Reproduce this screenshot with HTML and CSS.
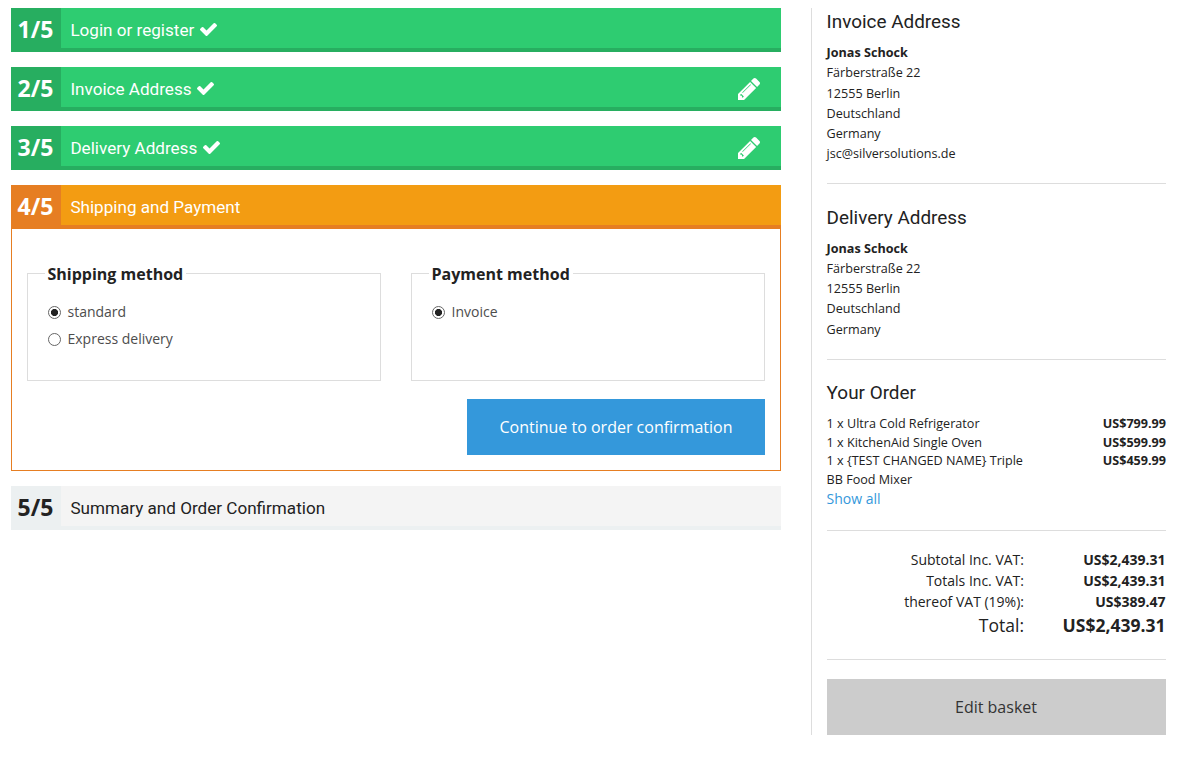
FILE: index.html
```html
<!DOCTYPE html>
<html lang="en">
<head>
<meta charset="utf-8">
<title>Checkout</title>
<link rel="stylesheet" href="styles.css">
</head>
<body>
<svg class="sprite" aria-hidden="true">
  <symbol id="check" viewBox="121 334 1550 1188"><path d="M1671 566q0 40-28 68l-724 724-136 136q-28 28-68 28t-68-28l-136-136-362-362q-28-28-28-68t28-68l136-136q28-28 68-28t68 28l294 295 656-657q28-28 68-28t68 28l136 136q28 28 28 68z"/></symbol>
  <symbol id="pencil" viewBox="128 149 1515 1515"><path d="M471 1490l60-60-190-190-50 50v80h110v120h70zm543-882q0-22-22-22-10 0-17 7l-542 542q-7 7-7 17 0 22 22 22 10 0 17-7l542-542q7-7 7-17zm-54-192l416 416-832 832h-416v-416zm683 96q0 53-37 90l-166 166-416-416 166-165q36-38 90-38 53 0 91 38l235 234q37 39 37 91z"/></symbol>
</svg>
<div class="page">
  <main class="steps">
    <section class="bar done"><span class="num">1/5</span><h2 class="title">Login or register</h2><svg class="check"><use href="#check"/></svg></section>
    <section class="bar done"><span class="num">2/5</span><h2 class="title">Invoice Address</h2><svg class="check"><use href="#check"/></svg><svg class="pencil"><use href="#pencil"/></svg></section>
    <section class="bar done"><span class="num">3/5</span><h2 class="title">Delivery Address</h2><svg class="check"><use href="#check"/></svg><svg class="pencil"><use href="#pencil"/></svg></section>
    <section class="current">
      <div class="bar active"><span class="num">4/5</span><h2 class="title">Shipping and Payment</h2></div>
      <form class="panel">
        <div class="methods">
          <fieldset class="method">
            <legend class="legend">Shipping method</legend>
            <label class="option"><input class="radio" type="radio" name="ship" checked>standard</label>
            <label class="option"><input class="radio" type="radio" name="ship">Express delivery</label>
          </fieldset>
          <fieldset class="method">
            <legend class="legend">Payment method</legend>
            <label class="option"><input class="radio" type="radio" name="pay" checked>Invoice</label>
          </fieldset>
        </div>
        <button class="button primary" type="button">Continue to order confirmation</button>
      </form>
    </section>
    <section class="bar pending"><span class="num">5/5</span><h2 class="title">Summary and Order Confirmation</h2></section>
  </main>
  <aside class="side">
    <section class="block invoice">
      <h3 class="heading">Invoice Address</h3>
      <address class="address"><b>Jonas Schock</b><br>Färberstraße 22<br>12555 Berlin<br>Deutschland<br>Germany<br>jsc@silversolutions.de</address>
    </section>
    <section class="block delivery">
      <h3 class="heading">Delivery Address</h3>
      <address class="address"><b>Jonas Schock</b><br>Färberstraße 22<br>12555 Berlin<br>Deutschland<br>Germany</address>
    </section>
    <section class="block order">
      <h3 class="heading">Your Order</h3>
      <div class="item"><span>1 x Ultra Cold Refrigerator</span><b>US$799.99</b></div>
      <div class="item"><span>1 x KitchenAid Single Oven</span><b>US$599.99</b></div>
      <div class="item"><span>1 x {TEST CHANGED NAME} Triple<br>BB Food Mixer</span><b>US$459.99</b></div>
      <a class="more">Show all</a>
    </section>
    <section class="block totals">
      <div class="sum"><span class="label">Subtotal Inc. VAT:</span><b>US$2,439.31</b></div>
      <div class="sum"><span class="label">Totals Inc. VAT:</span><b>US$2,439.31</b></div>
      <div class="sum"><span class="label">thereof VAT (19%):</span><b>US$389.47</b></div>
      <div class="sum grand"><span class="label">Total:</span><b>US$2,439.31</b></div>
    </section>
    <button class="button secondary" type="button">Edit basket</button>
  </aside>
</div>
</body>
</html>
```
FILE: styles.css
```css
* { box-sizing: border-box; }
body { margin: 0; background: #fff; color: #222; font-family: "Open Sans", sans-serif; }
.sprite { display: none; }
.page { display: flex; gap: 30px; padding: 8px 31px 0 11px; }
.steps { width: 770px; display: flex; flex-direction: column; gap: 15px; }

.bar { display: flex; align-items: stretch; height: 44px; border-bottom: 4px solid; color: #fff; }
.num { width: 50px; height: 44px; margin-bottom: -4px; padding-right: 1px; font-weight: 700; font-size: 23px; line-height: 43px; text-align: center; }
.title { margin: 0 0 0 9.4px; font: 400 17.1px/44px Roboto, sans-serif; white-space: nowrap; }
.done { background: #2ecc71; border-color: #27ae60; }
.done .num { background: #27ae60; }
.active { background: #f39c12; border-color: #e67e22; }
.active .num { background: #e67e22; }
.pending { background: #f4f4f4; border-color: #ecf0f1; color: #222; }
.pending .num { background: #ecf0f1; }
.check { width: 17px; height: 13px; margin: 15px 0 0 5.5px; fill: #fff; }
.pencil { width: 22px; height: 22px; margin: 11px 21px 0 auto; fill: #fff; }

.panel { height: 242px; padding: 33px 15px 15px; border: 1px solid #e67e22; border-top: 0; }
.methods { display: grid; grid-template-columns: 1fr 1fr; gap: 30px; height: 119px; }
.method { margin: 0; padding: 13px 20px 0; height: 119px; border: 1px solid #ddd; }
.legend { margin-left: -3.5px; padding: 1px 3px 0; font-weight: 700; font-size: 16px; line-height: 22px; }
.option { display: flex; align-items: center; height: 27px; font-size: 14px; color: #4d4d4d; }
.radio { appearance: none; width: 13px; height: 13px; margin: 1px 6.5px 0 0; border: 1px solid #666; border-radius: 50%; background: #fff; }
.radio:checked { background: radial-gradient(circle, #222 3.2px, #fff 3.9px); }
.button { display: block; height: 56px; padding: 0; border: 0; font: 400 16px "Open Sans", sans-serif; }
.primary { width: 298px; margin: 18px 0 0 auto; background: #3498db; color: #fff; }
.secondary { width: 100%; margin-top: 19px; padding-right: 1px; background: #ccc; color: #333; }

.side { flex: 1; height: 727px; padding-left: 15px; border-left: 1px solid #ddd; }
.block { border-bottom: 1px solid #ddd; }
.heading { margin: 0 0 0 -0.4px; font: 400 18.9px/26px Roboto, sans-serif; }
.address { margin-left: -0.4px; font-style: normal; font-size: 12.6px; line-height: 20.2px; }
.invoice { height: 176px; padding-top: 1px; }
.invoice .address { padding-top: 8.2px; }
.delivery { height: 176px; padding-top: 21px; }
.delivery .address { padding-top: 7.8px; }
.order { height: 171px; padding-top: 20px; }
.order .heading { margin-bottom: 9px; }
.item { display: flex; justify-content: space-between; margin-left: -0.4px; font-size: 12.6px; line-height: 18.6px; }
.more { display: block; margin-left: -0.4px; color: #3498db; font-size: 14px; line-height: 20px; }
.totals { height: 129px; padding-top: 18px; }
.sum { display: grid; grid-template-columns: 197px 1fr; padding-right: 0.5px; font-size: 14px; line-height: 21px; text-align: right; }
.grand { font-size: 17.5px; line-height: 26px; }
```
